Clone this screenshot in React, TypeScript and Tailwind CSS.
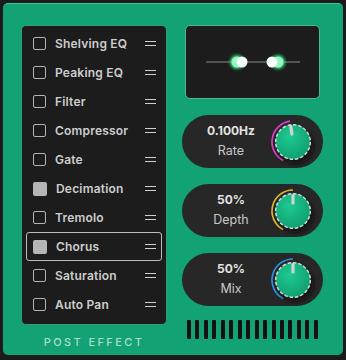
import React from 'react'

const effects = [
  { name: 'Shelving EQ', on: false },
  { name: 'Peaking EQ', on: false },
  { name: 'Filter', on: false },
  { name: 'Compressor', on: false },
  { name: 'Gate', on: false },
  { name: 'Decimation', on: true },
  { name: 'Tremolo', on: false },
  { name: 'Chorus', on: true, selected: true },
  { name: 'Saturation', on: false },
  { name: 'Auto Pan', on: false },
]

const knobs = [
  { value: '0.100Hz', label: 'Rate', color: '#d63fc9', angle: -8 },
  { value: '50%', label: 'Depth', color: '#d9b72a', angle: 0 },
  { value: '50%', label: 'Mix', color: '#2f8fe0', angle: 0 },
]

// point on a circle, angle measured clockwise from 12 o'clock
function polar(cx: number, cy: number, r: number, deg: number) {
  const a = ((deg - 90) * Math.PI) / 180
  return [cx + r * Math.cos(a), cy + r * Math.sin(a)]
}

function Knob({ color, angle, id }: { color: string; angle: number; id: string }) {
  const [sx, sy] = polar(25, 25, 21, -152)
  const [ex, ey] = polar(25, 25, 21, angle)
  return (
    <svg width="50" height="50" viewBox="0 0 50 50">
      <defs>
        <radialGradient id={id} cx="40%" cy="35%" r="70%">
          <stop offset="0%" stopColor="#1ec992" />
          <stop offset="100%" stopColor="#0f9d6e" />
        </radialGradient>
        <filter id={id + 's'} x="-50%" y="-50%" width="200%" height="200%">
          <feGaussianBlur stdDeviation="2" />
        </filter>
      </defs>
      <path d={`M ${sx} ${sy} A 21 21 0 0 1 ${ex} ${ey}`} fill="none" stroke={color} strokeWidth="1.7" />
      <circle cx="28" cy="29" r="17.5" fill="#0e0e0e" opacity="0.75" filter={`url(#${id}s)`} />
      <circle cx="25" cy="25" r="17.5" fill={`url(#${id})`} />
      <circle cx="25" cy="25" r="17.3" fill="none" stroke="#d8d8d8" strokeWidth="1.5" strokeDasharray="3.4 2" />
      <g transform={`rotate(${angle} 25 25)`}>
        <line x1="25" y1="9.5" x2="25" y2="17" stroke="#d2d2d2" strokeWidth="3.2" strokeLinecap="round" />
      </g>
    </svg>
  )
}

export default function App() {
  return (
    <div className="w-[346px] h-[360px] bg-[#1b1b1b] p-[3px] font-['Inter',sans-serif]">
      <div className="h-[352px] rounded-[5px] bg-[#12a275] border-t border-[#3ac89a] flex pl-[18px] pt-[21px] pr-[16px]">
        {/* Effect list */}
        <div className="w-[146px] flex flex-col">
          <div className="h-[300px] rounded-[5px] bg-[#1c1c1c] border border-[#2f9c78] pt-[3px] px-[4px]">
            {effects.map((fx) => (
              <div
                key={fx.name}
                className={`h-[29px] flex items-center pl-[6px] pr-[5px] rounded-[3px] border ${
                  fx.selected ? 'border-[#bdbdbd]' : 'border-transparent'
                }`}
              >
                {fx.on ? (
                  <div className="w-[14px] h-[14px] rounded-[2px] bg-[#b6b6b6]" />
                ) : (
                  <div className="w-[13px] h-[13px] rounded-[2px] border-[1.5px] border-[#b4b4b4]" />
                )}
                <span className="ml-[9px] flex-1 text-[12px] font-semibold text-[#cdcdcd] tracking-[0.2px]">
                  {fx.name}
                </span>
                <div className="w-[11px] flex flex-col gap-[3px]">
                  <div className="h-px bg-[#cfcfcf]" />
                  <div className="h-px bg-[#cfcfcf]" />
                </div>
              </div>
            ))}
          </div>
          <div className="mt-[9px] text-center text-[11px] font-medium tracking-[2.4px] text-[#a9ddc9]">
            POST EFFECT
          </div>
        </div>

        {/* Right column */}
        <div className="ml-[15px] w-[141px] flex flex-col">
          <div className="mx-[3px] h-[74px] rounded-[5px] bg-[#1c1c1c] border border-[#4fb892] flex items-center justify-center">
            <svg width="100" height="20" viewBox="0 0 100 20">
              <defs>
                <filter id="glow" x="-100%" y="-100%" width="300%" height="300%">
                  <feGaussianBlur stdDeviation="1.8" />
                </filter>
              </defs>
              <line x1="3" y1="10" x2="97" y2="10" stroke="#8a8a8a" strokeWidth="1" />
              <circle cx="34" cy="10" r="7" fill="#2ee07a" filter="url(#glow)" />
              <circle cx="34" cy="10" r="5.5" fill="#9af4c2" />
              <circle cx="39" cy="10" r="5.5" fill="#f6fff9" />
              <circle cx="75" cy="10" r="7" fill="#2ee07a" filter="url(#glow)" />
              <circle cx="75" cy="10" r="5.5" fill="#9af4c2" />
              <circle cx="69" cy="10" r="5.5" fill="#f6fff9" />
            </svg>
          </div>

          <div className="mt-[16px] flex flex-col gap-[16px]">
            {knobs.map((k, i) => (
              <div key={k.label} className="h-[53px] rounded-full bg-[#272727] flex items-center pr-[5px]">
                <div className="flex-1 pl-[12px] flex flex-col items-center leading-none">
                  <span className="text-[12px] font-bold text-[#e2e2e2]">{k.value}</span>
                  <span className="mt-[8px] text-[12.5px] text-[#c9c9c9]">{k.label}</span>
                </div>
                <Knob color={k.color} angle={k.angle} id={'knob' + i} />
              </div>
            ))}
          </div>

          <div className="mt-[14px] mx-[5px] h-[19px] flex justify-between">
            {Array.from({ length: 16 }).map((_, i) => (
              <div key={i} className="w-[4px] h-full rounded-[1px] bg-[#121212]" />
            ))}
          </div>
        </div>
      </div>
    </div>
  )
}
